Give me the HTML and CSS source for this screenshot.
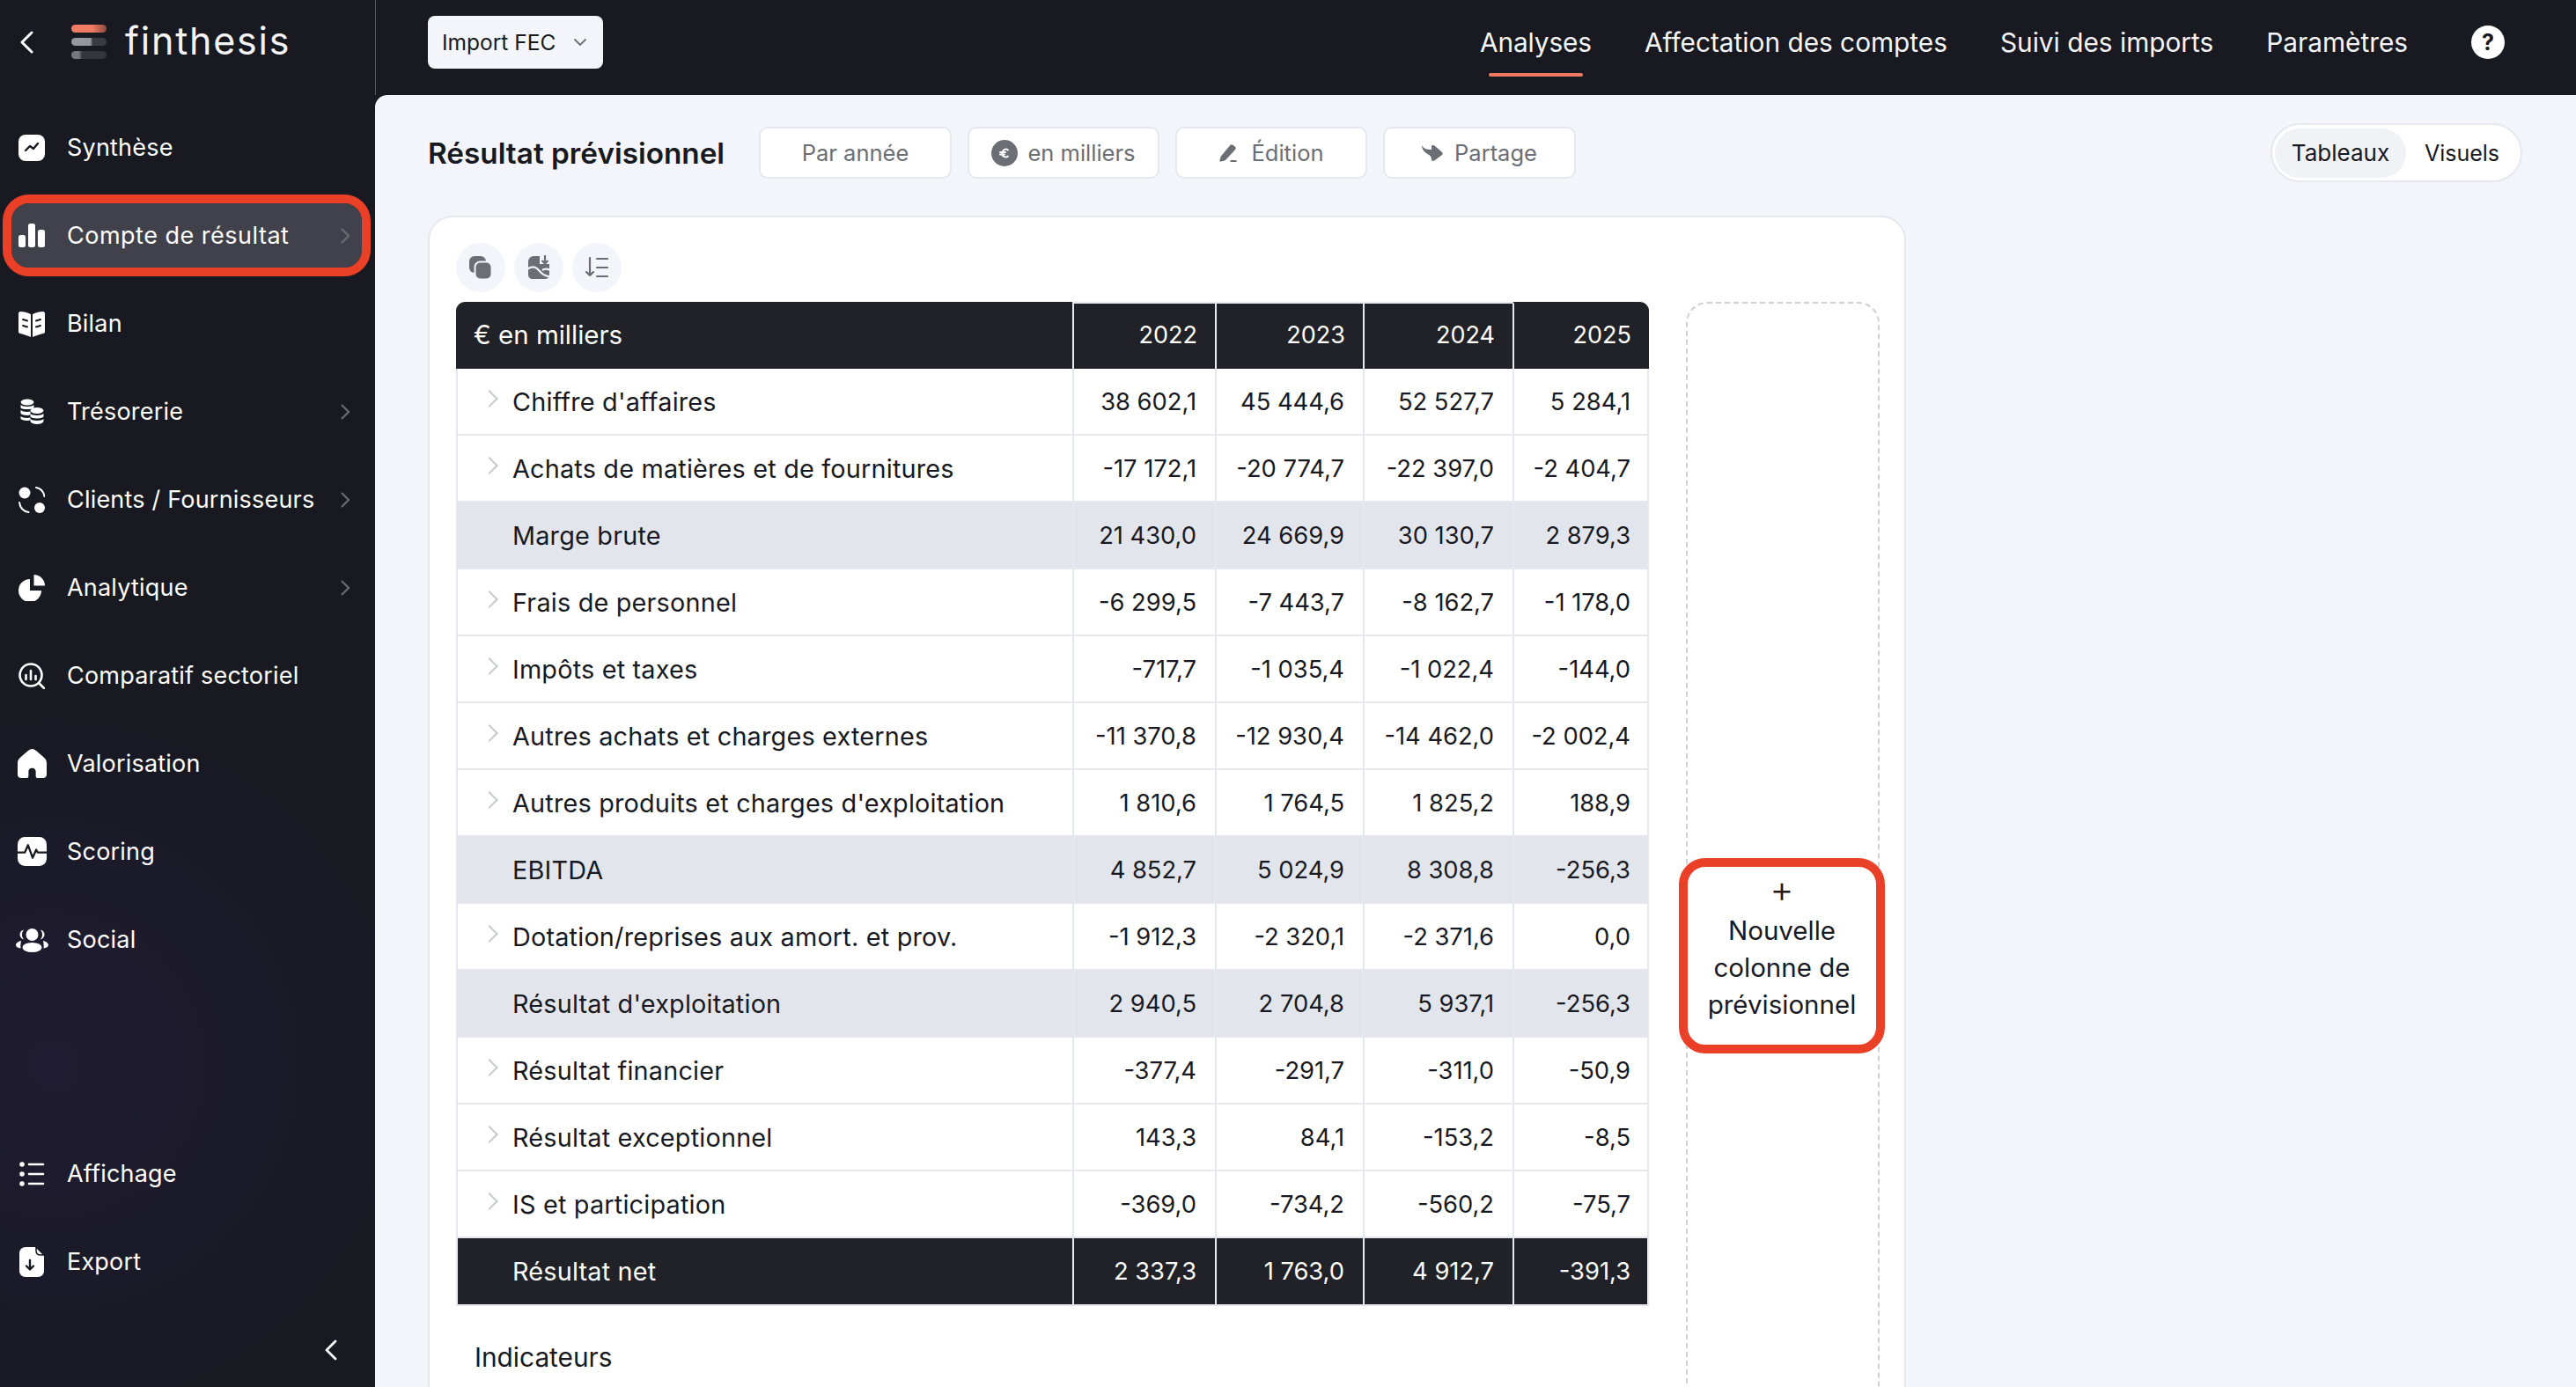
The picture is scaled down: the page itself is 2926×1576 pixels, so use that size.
FILE: index.html
```html
<!DOCTYPE html>
<html lang="fr">
<head>
<meta charset="utf-8">
<title>Finthesis</title>
<link rel="stylesheet" href="styles.css">
</head>
<body>
<div class="app">
<aside class="sidebar">
  <div class="brand">
    <svg class="back" viewBox="0 0 18 26"><path d="M15 2 4 13l11 11"/></svg>
    <svg class="logo" viewBox="0 0 40 40">
      <defs>
        <linearGradient id="lg1"><stop offset="0.6" stop-color="#ee7b62"/><stop offset="1" stop-color="#8d4a40"/></linearGradient>
        <linearGradient id="lg2"><stop offset="0.55" stop-color="#96979d"/><stop offset="0.6" stop-color="#3a3b42"/></linearGradient>
        <linearGradient id="lg3"><stop offset="0.22" stop-color="#77787e"/><stop offset="0.3" stop-color="#35363d"/></linearGradient>
      </defs>
      <rect x="0" y="0" width="40" height="9" rx="4.5" fill="url(#lg1)"/>
      <rect x="0" y="15" width="40" height="9" rx="4.5" fill="url(#lg2)"/>
      <rect x="0" y="30" width="40" height="9" rx="4.5" fill="url(#lg3)"/>
    </svg>
    <span class="wordmark">finthesis</span>
  </div>
  <nav class="nav">
    <a class="item"><svg class="ico" viewBox="0 0 30 30"><rect width="30" height="30" rx="8" fill="#fff"/><path d="M8 18l5-5 4 3 5-6" fill="none" stroke="#181921" stroke-width="2.4" stroke-linecap="round" stroke-linejoin="round"/></svg><span>Synthèse</span></a>
    <a class="item active"><svg class="ico" viewBox="0 0 30 30"><rect x="0" y="14" width="8" height="14" rx="2.5" fill="#fff"/><rect x="11" y="1" width="8" height="27" rx="2.5" fill="#fff"/><rect x="22" y="8" width="8" height="20" rx="2.5" fill="#fff"/></svg><span>Compte de résultat</span><svg class="chev" viewBox="0 0 12 20"><path d="M2 2l8 8-8 8"/></svg></a>
    <a class="item"><svg class="ico" viewBox="0 0 30 30"><path d="M0 3c0-1 1-2 2-2 4 0 8 1 12 3v26C10 28 6 27 2 26c-1 0-2-1-2-2z" fill="#fff"/><path d="M30 3c0-1-1-2-2-2-4 0-8 1-12 3v26c4-2 8-3 12-4 1 0 2-1 2-2z" fill="#fff"/><path d="M5 10l5 1.500M5 17l5 1.500M20 11.500l5-1.500M20 18.500l5-1.500" stroke="#181921" stroke-width="2" stroke-linecap="round"/></svg><span>Bilan</span></a>
    <a class="item"><svg class="ico" viewBox="0 0 30 30"><g fill="#fff"><ellipse cx="10" cy="4" rx="7.500" ry="3.500"/><path d="M2.500 7c2 2.500 13 2.500 15 0v3.500c-2 2-13 2-15 0zM2.500 13c2 2 8 2.500 11 1.500v4c-3 1-9 .5-11-1.500zM2.500 20c2 2 8 2.500 11 1.500v3c-3 1-9 .5-11-1.500z"/><ellipse cx="21" cy="13.500" rx="7.500" ry="3.500"/><path d="M13.500 17c2 2.500 13 2.500 15 0v3.500c-2 2.500-13 2.500-15 0zM13.500 23c2 2.500 13 2.500 15 0v3c-2 4-13 4-15 0z"/></g></svg><span>Trésorerie</span><svg class="chev" viewBox="0 0 12 20"><path d="M2 2l8 8-8 8"/></svg></a>
    <a class="item"><svg class="ico" viewBox="0 0 30 30"><circle cx="7" cy="7" r="6.500" fill="#fff"/><circle cx="24" cy="24" r="6" fill="#fff"/><path d="M20 1c5 .8 8.500 4.500 9.500 10M1 18c.8 5.500 4.500 10 10.500 11" fill="none" stroke="#fff" stroke-width="2" stroke-linecap="round"/></svg><span>Clients / Fournisseurs</span><svg class="chev" viewBox="0 0 12 20"><path d="M2 2l8 8-8 8"/></svg></a>
    <a class="item"><svg class="ico" viewBox="0 0 30 30"><path d="M13 5a13 13 0 1 0 13 13H13z" fill="#fff"/><path d="M17.500 0a12.500 12.500 0 0 1 12.500 12.500H17.500z" fill="#fff"/></svg><span>Analytique</span><svg class="chev" viewBox="0 0 12 20"><path d="M2 2l8 8-8 8"/></svg></a>
    <a class="item"><svg class="ico" viewBox="0 0 30 30"><circle cx="14" cy="14" r="12.500" fill="none" stroke="#fff" stroke-width="2.600"/><path d="M24 24l5 5" stroke="#fff" stroke-width="2.600" stroke-linecap="round"/><path d="M8.500 14v5M14 9v10M19.500 15v4" stroke="#fff" stroke-width="2.600" stroke-linecap="round"/></svg><span>Comparatif sectoriel</span></a>
    <a class="item"><svg class="ico ico-l" viewBox="0 0 32 32"><path d="M16 0c2 0 3 1 5 2.500l7 6c3 2.500 4 4 4 7.500v12c0 2.500-1.500 4-4 4h-6c-1 0-2-1-2-2v-5c0-3-2-4-4-4s-4 1-4 4v5c0 1-1 2-2 2H4c-2.500 0-4-1.500-4-4V16c0-3.500 1-5 4-7.500l7-6C13 1 14 0 16 0z" fill="#fff"/></svg><span>Valorisation</span></a>
    <a class="item"><svg class="ico ico-l" viewBox="0 0 32 32"><rect width="32" height="32" rx="8" fill="#fff"/><path d="M0 17h8l3.500-8 5 14 4-9 1.500 3h10" fill="none" stroke="#181921" stroke-width="2.200" stroke-linejoin="round"/></svg><span>Scoring</span></a>
    <a class="item"><svg class="ico ico-w" viewBox="0 0 37 28"><g fill="#fff"><circle cx="18.500" cy="8" r="7"/><ellipse cx="18.500" cy="22.500" rx="11" ry="5.500"/><path d="M9 2.500C6 3 4.500 5.500 4.500 8s2 5 4.500 5.500C7.500 11.500 7 10 7 8s.5-3.500 2-5.500zM28 2.500c3 .5 4.500 3 4.500 5.500s-2 5-4.500 5.500c1.500-2 2-3.500 2-5.500s-.5-3.500-2-5.500zM6 15c-3 .5-6 2.500-6 5 0 1.500 2 3 5.500 3.500C5 21 5.500 18 6 15zM31 15c3 .5 6 2.500 6 5 0 1.500-2 3-5.500 3.500.5-2.500 0-5.500-.5-8.500z"/></g></svg><span>Social</span></a>
  </nav>
  <div class="nav nav-bottom">
    <a class="item"><svg class="ico" viewBox="0 0 30 30"><g fill="#fff"><circle cx="4" cy="4" r="2.800"/><circle cx="4" cy="15" r="2.800"/><circle cx="4" cy="26" r="2.800"/></g><path d="M12 4h16M12 15h16M12 26h16" stroke="#fff" stroke-width="2.600" stroke-linecap="round"/></svg><span>Affichage</span></a>
    <a class="item"><svg class="ico ico-t" viewBox="0 0 28 34"><path d="M7 0h11l10 10v17c0 4-3 7-7 7H7c-4 0-7-3-7-7V7c0-4 3-7 7-7z" fill="#fff"/><path d="M19 0l9 9h-4c-3 0-5-2-5-5z" fill="#fff" stroke="#181921" stroke-width="1.500"/><path d="M12 15v10M8 21.500l4 4 4-4" fill="none" stroke="#181921" stroke-width="2.400" stroke-linecap="round" stroke-linejoin="round"/></svg><span>Export</span></a>
    <div class="collapse"><svg class="collapse-ico" viewBox="0 0 14 24"><path d="M12 2 2 12l10 10"/></svg></div>
  </div>
</aside>
<div class="content">
  <header class="topbar">
    <button class="import">Import FEC<svg class="down" viewBox="0 0 16 10"><path d="M1.500 1.500 8 8l6.500-6.500"/></svg></button>
    <nav class="tabs">
      <a class="tab current">Analyses</a>
      <a class="tab">Affectation des comptes</a>
      <a class="tab">Suivi des imports</a>
      <a class="tab">Paramètres</a>
      <span class="help">?</span>
    </nav>
  </header>
  <main class="main">
    <div class="head">
      <h1>Résultat prévisionnel</h1>
      <button class="pill-btn w-year">Par année</button>
      <button class="pill-btn w-unit"><svg class="btn-ico" viewBox="0 0 30 30"><circle cx="15" cy="15" r="15" fill="#6c6e75"/><path d="M19 11.500c-2.500-2-6-.8-6.500 3.500s4 5.500 6.500 3.500M10 14h6M10 16.500h5" fill="none" stroke="#fff" stroke-width="2" stroke-linecap="round"/></svg>en milliers</button>
      <button class="pill-btn w-edit"><svg class="btn-ico pen" viewBox="0 0 20 20"><path d="M12.500.8c1-.8 2-.8 3 0l2.500 2c1 1 1 2 .2 3L8 17c-1 1-2 1.500-3 1.800l-3 .8c-1 .2-1.800-.6-1.500-1.600l.8-3c.3-1 .8-2 1.600-2.800z" fill="#6c6e75"/><path d="M12.500 19h7" stroke="#6c6e75" stroke-width="1.800"/></svg>Édition</button>
      <button class="pill-btn w-share"><svg class="btn-ico arrow" viewBox="0 0 24 20"><path d="M0 1C2 5 5 6 11 6V3c0-2 2-3 3.500-1.500L23 9c1 1 1 2 0 3l-8 6c-2 1.500-4 1-4-1 0-4-3-5-6-7C2 8 0 5 0 1z" fill="#6c6e75"/></svg>Partage</button>
      <div class="toggle"><span class="seg on">Tableaux</span><span class="seg">Visuels</span></div>
    </div>
    <section class="card">
      <div class="table-side">
        <div class="tools">
          <span class="tool"><svg viewBox="0 0 26 28"><rect x="0" y="1" width="19" height="19" rx="6" fill="#6c6e75"/><rect x="6.500" y="7.500" width="19" height="20" rx="6" fill="#6c6e75" stroke="#f3f5fa" stroke-width="2"/></svg></span>
          <span class="tool"><svg viewBox="0 0 26 28"><path d="M7 1h14c2.500 0 4 2 4 4v17c0 3-2 5-5 5H6c-3 0-5-2-5-5V7c0-3 3-6 6-6z" fill="#6c6e75"/><path d="M0 16c5-4 9-3 12 0s6 8 13 8M17 17c2-1.500 5-2 9 0" fill="none" stroke="#f3f5fa" stroke-width="2.200"/><path d="M14 0h12v10H14z" fill="#f3f5fa"/><path d="M20 0v9M16.500 6l3.500 3.500L23.500 6" fill="none" stroke="#6c6e75" stroke-width="2.200"/></svg></span>
          <span class="tool"><svg viewBox="0 0 26 26"><path d="M5 2v20M1 18l4 4 4-4M13 3h12M13 13h12M13 23h12" fill="none" stroke="#6c6e75" stroke-width="2.200" stroke-linecap="round" stroke-linejoin="round"/></svg></span>
        </div>
        <table class="grid">
          <thead><tr><th class="lbl">€ en milliers</th><th class="c1">2022</th><th class="c2">2023</th><th class="c3">2024</th><th class="c4">2025</th></tr></thead>
          <tbody>
            <tr><td class="name exp">Chiffre d'affaires</td><td>38 602,1</td><td>45 444,6</td><td>52 527,7</td><td>5 284,1</td></tr>
            <tr><td class="name exp">Achats de matières et de fournitures</td><td>-17 172,1</td><td>-20 774,7</td><td>-22 397,0</td><td>-2 404,7</td></tr>
            <tr class="sub"><td class="name">Marge brute</td><td>21 430,0</td><td>24 669,9</td><td>30 130,7</td><td>2 879,3</td></tr>
            <tr><td class="name exp">Frais de personnel</td><td>-6 299,5</td><td>-7 443,7</td><td>-8 162,7</td><td>-1 178,0</td></tr>
            <tr><td class="name exp">Impôts et taxes</td><td>-717,7</td><td>-1 035,4</td><td>-1 022,4</td><td>-144,0</td></tr>
            <tr><td class="name exp">Autres achats et charges externes</td><td>-11 370,8</td><td>-12 930,4</td><td>-14 462,0</td><td>-2 002,4</td></tr>
            <tr><td class="name exp">Autres produits et charges d'exploitation</td><td>1 810,6</td><td>1 764,5</td><td>1 825,2</td><td>188,9</td></tr>
            <tr class="sub"><td class="name">EBITDA</td><td>4 852,7</td><td>5 024,9</td><td>8 308,8</td><td>-256,3</td></tr>
            <tr><td class="name exp">Dotation/reprises aux amort. et prov.</td><td>-1 912,3</td><td>-2 320,1</td><td>-2 371,6</td><td>0,0</td></tr>
            <tr class="sub"><td class="name">Résultat d'exploitation</td><td>2 940,5</td><td>2 704,8</td><td>5 937,1</td><td>-256,3</td></tr>
            <tr><td class="name exp">Résultat financier</td><td>-377,4</td><td>-291,7</td><td>-311,0</td><td>-50,9</td></tr>
            <tr><td class="name exp">Résultat exceptionnel</td><td>143,3</td><td>84,1</td><td>-153,2</td><td>-8,5</td></tr>
            <tr><td class="name exp">IS et participation</td><td>-369,0</td><td>-734,2</td><td>-560,2</td><td>-75,7</td></tr>
            <tr class="total"><td class="name">Résultat net</td><td>2 337,3</td><td>1 763,0</td><td>4 912,7</td><td>-391,3</td></tr>
          </tbody>
        </table>
        <div class="indic">Indicateurs</div>
      </div>
      <div class="new-col">
        <button class="new-btn"><span class="plus">+</span>Nouvelle colonne de prévisionnel</button>
      </div>
    </section>
  </main>
</div>
</div>
</body>
</html>
```
FILE: styles.css
```css
* { box-sizing: border-box; }
html, body { margin: 0; height: 100%; overflow: hidden; }
body { font-family: Inter, "Liberation Sans", sans-serif; font-size: 27px; color: #181921; background: #181921; }
.app { display: flex; height: 1576px; }
a { display: block; }
button { font: inherit; cursor: pointer; }

/* Sidebar */
.sidebar {
  width: 426px; flex: none; display: flex; flex-direction: column; color: #fff; position: relative;
  background: radial-gradient(ellipse 420px 420px at 60px 1210px, #201c33 0%, #181921 100%);
}
.brand { height: 108px; display: flex; align-items: center; flex: none; padding-bottom: 12px; }
.back { width: 18px; height: 26px; margin-left: 21px; fill: none; stroke: #fff; stroke-width: 3; stroke-linecap: round; stroke-linejoin: round; }
.logo { width: 40px; height: 40px; margin-left: 42px; }
.wordmark { margin-left: 21px; font-size: 43px; line-height: 1; letter-spacing: 1.800px; font-weight: 400; color: #f4f4f6; margin-top: -3px; }
.nav { padding: 23px 15px 0 13px; display: flex; flex-direction: column; gap: 27px; }
.nav-bottom { margin-top: auto; padding-top: 0; }
.item { height: 73px; display: flex; align-items: center; padding: 0 13px 0 8px; border-radius: 20px; position: relative; font-size: 27px; letter-spacing: 0.2px; white-space: nowrap; }
.item.active { background: #41414b; outline: 10px solid #e94027; outline-offset: 0; }
.item.active span { letter-spacing: 0.5px; }
.item.active::before { content: ""; position: absolute; left: -13px; top: -2px; bottom: -2px; width: 16px; background: #35353d; border-radius: 6px 0 0 6px; z-index: -1; }
.ico { width: 30px; height: 30px; flex: none; margin-right: 25px; }
.ico-l { width: 33px; height: 33px; margin-left: -1.500px; margin-right: 23.500px; }
.ico-w { width: 37px; height: 28px; margin-left: -3px; margin-right: 21px; }
.ico-t { width: 28px; height: 34px; margin-left: 1px; margin-right: 26px; }
.chev { width: 12px; height: 20px; margin-left: auto; fill: none; stroke: #6b6c73; stroke-width: 2.200; }
.collapse { height: 73px; display: flex; align-items: center; justify-content: flex-end; padding-right: 28px; margin-bottom: 6px; }
.collapse-ico { width: 14px; height: 24px; fill: none; stroke: #fff; stroke-width: 2.800; stroke-linecap: round; stroke-linejoin: round; }

/* Top bar */
.content { flex: 1; min-width: 0; display: flex; flex-direction: column; }
.topbar { height: 108px; flex: none; display: flex; align-items: center; justify-content: space-between; padding: 0 81px 12px 60px; background: #181921; box-shadow: inset 1px 0 0 #55565c; }
.import { height: 60px; width: 199px; border: 0; border-radius: 8px; background: #f3f5fa; display: flex; align-items: center; padding: 0 0 0 16px; font-size: 24.500px; color: #181921; }
.down { width: 16px; height: 10px; margin-left: 20px; fill: none; stroke: #6c6e75; stroke-width: 1.800; }
.tabs { display: flex; align-items: center; gap: 60px; color: #f4f5f8; font-size: 29.800px; }
.tab { position: relative; height: 40px; line-height: 40px; white-space: nowrap; }
.tab.current { letter-spacing: -0.100px; }
.tab.current::after { content: ""; position: absolute; left: 10px; right: 10px; top: 55px; height: 4px; border-radius: 2px; background: #ee7b62; }
.help { width: 38px; height: 38px; border-radius: 50%; background: #fff; color: #181921; display: flex; align-items: center; justify-content: center; font-size: 25px; font-weight: 700; margin-left: 12px; }

/* Main */
.main { flex: 1; background: #f3f5fa; border-radius: 14px 0 0 0; padding: 32px 61px 0 60px; min-height: 0; overflow: hidden; }
.head { display: flex; align-items: center; height: 67px; }
h1 { margin: 0 40px 0 0; font-size: 33.300px; font-weight: 600; color: #181921; white-space: nowrap; width: 336px; }
.pill-btn { height: 59px; background: #fff; border: 2px solid #e6e8ef; border-radius: 10px; color: #6c6e75; font-size: 25.500px; display: flex; align-items: center; justify-content: center; margin-right: 18px; padding: 0; white-space: nowrap; }
.w-year { width: 219px; } .w-unit { width: 218px; } .w-edit { width: 218px; } .w-share { width: 219px; margin-right: 0; }
.btn-ico { width: 30px; height: 30px; margin-right: 11px; }
.btn-ico.pen { width: 20px; height: 20px; margin-right: 17px; }
.btn-ico.arrow { width: 24px; height: 20px; margin-right: 13px; }
.toggle { margin-left: auto; width: 286px; height: 67px; background: #fff; border: 2px solid #e6e8ef; border-radius: 34px; display: flex; align-items: center; padding: 0 3px; font-size: 26px; white-space: nowrap; }
.seg { height: 56px; line-height: 56px; border-radius: 28px; text-align: center; }
.seg.on { width: 149px; background: #f1f2f5; }
.seg:last-child { flex: 1; font-size: 25px; }

.card { margin-top: 38px; width: 1679px; height: 1400px; background: #fff; border: 2px solid #e6e8ef; border-radius: 28px; padding: 29px 20px 0 30px; display: flex; align-items: flex-start; }
.table-side { width: 1356px; flex: none; }
.tools { display: flex; gap: 10px; height: 56px; margin-bottom: 11px; }
.tool { width: 56px; height: 56px; border-radius: 50%; background: #f3f5fa; display: flex; align-items: center; justify-content: center; }
.tool svg { width: 26px; height: 28px; }
.grid { border-collapse: separate; border-spacing: 0; table-layout: fixed; width: 1355px; font-size: 27.300px; }
.grid th { height: 76px; background: #212227; color: #fff; font-weight: 400; font-size: 27px; text-align: right; padding: 0 20px 4px 0; border-left: 2px solid #e6e8ef; border-top: 2px solid #e6e8ef; }
.grid th.lbl { text-align: left; padding-left: 20px; border-left: 0; border-radius: 10px 0 0 0; border-top-color: #212227; font-size: 29.500px; }
.grid th.c4 { border-radius: 0 10px 0 0; border-top-color: #212227; }
.lbl { width: 700px; } .c1 { width: 162px; } .c2 { width: 168px; } .c3 { width: 170px; } .c4 { width: 155px; }
.grid td { height: 76px; padding: 0 21px 0 0; text-align: right; border-left: 2px solid #e6e8ef; border-bottom: 2px solid #e6e8ef; white-space: nowrap; }
.grid td:last-child { border-right: 2px solid #e6e8ef; padding-right: 19px; }
.grid td.name { text-align: left; padding-left: 62px; position: relative; font-size: 28.800px; letter-spacing: 0.200px; }
.grid td.exp::before { content: ""; position: absolute; left: 29px; top: 27px; width: 12px; height: 12px; border-top: 2px solid #c9cacd; border-right: 2px solid #c9cacd; transform: rotate(45deg); }
.grid tr.sub td { background: #e2e5ec; }
.grid tr.total td { background: #212227; color: #fff; height: 77px; }
.indic { padding: 40px 0 0 21px; font-size: 29.800px; }

.new-col { margin-left: 41px; width: 220px; height: 1300px; border: 2px dashed #cfd0d3; border-radius: 24px; position: relative; margin-top: 67px; }
.new-btn { position: absolute; left: -10px; top: 630px; width: 234px; height: 222px; margin: 0; border: 0; background: #fff; outline: 10px solid #e94027; outline-offset: -10px; border-radius: 30px; font-size: 29.500px; line-height: 42px; color: #181921; padding: 0 16px 20px; text-align: center; display: block; }
.plus { display: block; font-size: 42px; line-height: 40px; margin-bottom: 6px; font-weight: 300; }
```
